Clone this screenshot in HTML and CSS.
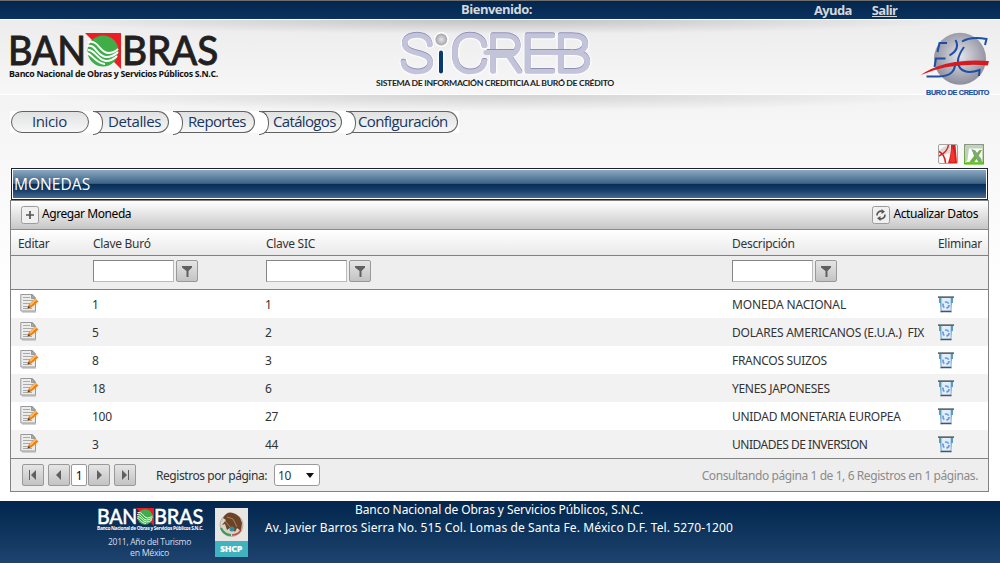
FILE: index.html
```html
<!DOCTYPE html>
<html lang="es">
<head>
<meta charset="utf-8">
<title>SICREB - Monedas</title>
<link rel="stylesheet" href="styles.css">
</head>
<body>
<svg class="defs" width="0" height="0" aria-hidden="true">
  <defs>
    <radialGradient id="ball" cx="50%" cy="45%" r="55%"><stop offset="0" stop-color="#e4e4ea"/><stop offset="1" stop-color="#8d8d9c"/></radialGradient>
    <radialGradient id="dot"><stop offset="0" stop-color="#e6e6e8"/><stop offset="1" stop-color="#9c9ca4"/></radialGradient>
    <linearGradient id="bin" x1="0" x2="1"><stop offset="0" stop-color="#4b93b5"/><stop offset=".25" stop-color="#e4f1fb"/><stop offset=".8" stop-color="#dcecfa"/><stop offset="1" stop-color="#4f8fae"/></linearGradient>
    <linearGradient id="xl" x1="0" x2="0" y1="0" y2="1"><stop offset="0" stop-color="#8a9a86"/><stop offset="1" stop-color="#55b010"/></linearGradient>
    <symbol id="emblem" viewBox="0 0 36 36">
      <path fill="#ee1c25" d="M0 0h36v36z"/>
      <circle cx="18" cy="18" r="15.500" fill="#3fae49"/>
      <g fill="none" stroke="#fff" stroke-width="1.900"><path d="M2 13c10-2 9 10 19 11 5 0 9-2 12-5"/><path d="M3 17c8 0 9 10 18 11 5 0 8-2 11-5"/><path d="M3 9c11-2 11 10 20 11 4 0 8-2 10-4"/><path d="M2 20c6 2 8 10 18 11"/></g>
    </symbol>
    <symbol id="edit" viewBox="0 0 20 20">
      <path d="M2 19h14" stroke="#c4c4c4" stroke-width="1.500"/>
      <path d="M.8 1.500h11.700l3 3.500v13H.8z" fill="#ececec" stroke="#999"/>
      <path d="M11.500 1.500v4h4z" fill="#aaa" stroke="#999"/>
      <path d="M3 4.500h7M3 7.500h10M3 10.500h7M3 13.500h5M3 15.500h9" stroke="#aaa"/>
      <path d="M7.500 15.500l1.300-4L15 5.500l3.500 3-7.200 6z" fill="#ee7f10"/>
      <path d="M9.300 11.300L15.300 5.500l1.500 1.200-6 6z" fill="#ffb95a"/><path d="M7.500 15.500l.8-2.500 2 1.600z" fill="#444"/>
    </symbol>
    <symbol id="trash" viewBox="0 0 16 17">
      <path d="M1.500 2h13l-1.200 14.500h-10.600z" fill="url(#bin)"/>
      <path d="M0 .3h16v1.700h-16z" fill="#62676c"/><path d="M1 2h2v5h-2zM13 2h2v5h-2z" fill="#5a9cbb"/>
      <path d="M2.600 14.700h10.800v1.500h-10.800z" fill="#4c5258"/>
      <circle cx="8" cy="9" r="3" fill="none" stroke="#6a98e4" stroke-width="1.700" stroke-dasharray="4.300 2"/>
    </symbol>
    <symbol id="funnel" viewBox="1 1 20 20"><path d="M6 6h10v1.500L12.500 11v6h-2v-6L6 7.500z" fill="#606060"/></symbol>
  </defs>
</svg>

<div class="topbar"><span class="welcome">Bienvenido:</span><nav class="user"><a>Ayuda</a><a class="out">Salir</a></nav></div>

<header class="banner">
  <svg class="logo-bank" width="212" height="50" viewBox="0 0 212 50">
    <g font-family="Lato" font-weight="500" font-size="41" fill="#231f20" stroke="#231f20" stroke-width=".8">
      <text x="-2" y="31.500" textLength="78" lengthAdjust="spacingAndGlyphs">BAN</text>
      <text x="112" y="31.500" textLength="96" lengthAdjust="spacingAndGlyphs">BRAS</text>
    </g>
    <use href="#emblem" x="75" y="0" width="36" height="36"/>
    <text x="-1" y="44" font-family="Open Sans" font-weight="700" font-size="8.500" fill="#111" textLength="209" lengthAdjust="spacingAndGlyphs">Banco Nacional de Obras y Servicios Públicos S.N.C.</text>
  </svg>
  <svg class="logo-app" width="250" height="62" viewBox="0 0 250 62">
    <g font-family="Roboto" font-weight="100" font-size="51" stroke-linejoin="round" stroke-linecap="round">
      <g fill="none" stroke="#fbfbfd" stroke-width="6">
        <text x="30" y="44" textLength="33" lengthAdjust="spacingAndGlyphs">S</text><text x="80" y="44" textLength="39" lengthAdjust="spacingAndGlyphs">C</text><text x="117" y="44" textLength="37" lengthAdjust="spacingAndGlyphs">R</text><text x="151" y="44" textLength="34" lengthAdjust="spacingAndGlyphs">E</text><text x="184" y="44" textLength="37" lengthAdjust="spacingAndGlyphs">B</text>
      </g>
      <g fill="#8f8fb8" stroke="#8f8fb8" stroke-width="3.500" transform="translate(0 -.7)">
        <text x="30" y="44" textLength="33" lengthAdjust="spacingAndGlyphs">S</text><text x="80" y="44" textLength="39" lengthAdjust="spacingAndGlyphs">C</text><text x="117" y="44" textLength="37" lengthAdjust="spacingAndGlyphs">R</text><text x="151" y="44" textLength="34" lengthAdjust="spacingAndGlyphs">E</text><text x="184" y="44" textLength="37" lengthAdjust="spacingAndGlyphs">B</text>
      </g>
      <path d="M116 24.500h28M160 24.500h42" stroke="#c3c3da" stroke-width="5"/>
      <g fill="#c3c3da" stroke="#c3c3da" stroke-width="3.500">
        <text x="30" y="44" textLength="33" lengthAdjust="spacingAndGlyphs">S</text><text x="80" y="44" textLength="39" lengthAdjust="spacingAndGlyphs">C</text><text x="117" y="44" textLength="37" lengthAdjust="spacingAndGlyphs">R</text><text x="151" y="44" textLength="34" lengthAdjust="spacingAndGlyphs">E</text><text x="184" y="44" textLength="37" lengthAdjust="spacingAndGlyphs">B</text>
      </g>
    </g>
    <circle cx="71.300" cy="11.500" r="6.700" fill="url(#dot)" stroke="#fff" stroke-width="1.500"/>
    <path d="M71 24.500v19" stroke="#fff" stroke-width="6.500" stroke-linecap="round"/>
    <path d="M71 24.500v19" stroke="#063a70" stroke-width="4" stroke-linecap="round"/>
    <path d="M117 21.500h27M160 21.500h41" stroke="#8f8fb8"/>
    <text x="6" y="58" font-family="Lato" font-weight="700" font-size="8" fill="#1c1c1c" textLength="238" lengthAdjust="spacingAndGlyphs">SISTEMA DE INFORMACIÓN CREDITICIA AL BURÓ DE CRÉDITO</text>
  </svg>
  <svg class="logo-buro" width="70" height="66" viewBox="0 0 70 66">
    <circle cx="40" cy="26.700" r="26" fill="url(#ball)"/>
    <g fill="none" stroke="#1b4fa5" stroke-width="2">
      <path d="M17.500 20l2-9h7.500"/><path d="M35.500 8q5 9-6 15.500"/><path d="M14.500 35l1.500-8.500h9.500"/><path d="M35 30q1 14-16 14.500H6.500"/>
      <path d="M42 9.500q9-5.500 24.500-2.500l-1.500 6"/><path d="M44 15q-10 14-3.500 21.500 6 6 19 1.500l-.5 6"/>
    </g>
    <path d="M.7 43q25-17 68.300-14l-1.200 4.400q-38-3-67.100 9.600z" fill="#d71920"/>
    <text x="6" y="63" font-family="Liberation Sans" font-weight="700" font-size="7" fill="#1b4fa5" stroke="#1b4fa5" stroke-width=".2" textLength="63" lengthAdjust="spacingAndGlyphs">BURO DE CREDITO</text>
  </svg>
</header>

<main class="page">
  <nav class="menu">
    <a class="tab first">Inicio</a><a class="tab t2">Detalles</a><a class="tab t3">Reportes</a><a class="tab t4">Catálogos</a><a class="tab t5">Configuración</a>
  </nav>
  <div class="exports">
    <svg width="20" height="21" viewBox="0 0 20 21"><rect x=".5" y=".5" width="19" height="19" rx="1.500" fill="#faf8f7" stroke="#a7a29f"/><path d="M1 6l8-5h3v8l-6 2-5-2z" fill="#dedad8"/><path d="M13 1h4.500l1.500 18h-9q3-8 3-18z" fill="#d3211d"/><path d="M10.500 1q-1 7-9.500 11M1 7.500q6 3 6.500 11.500" fill="none" stroke="#d8231f" stroke-width="1.500"/><path d="M14 2l2.500 8 .5 8h-5z" fill="#f3352d"/></svg>
    <svg width="20" height="21" viewBox="0 0 20 21"><rect x=".7" y=".7" width="18.600" height="19" fill="#fff" stroke="url(#xl)" stroke-width="1.500"/><path d="M2 2h16v2.500H5L3.500 16 2 18z" fill="#c1cfbd"/><path d="M8 6h3l2 3 2.500-3H18l-3.500 6 4 6.500h-4L12.500 15 10 18.500H5l5-6.500z" fill="#6eb244"/><path d="M7 5l3.500 1 7 9v3l-4-3z" fill="#82a685"/><path d="M2 19.200h17" stroke="#5cc614" stroke-width="2"/></svg>
  </div>
  <h1 class="title"><span>MONEDAS</span></h1>
  <section class="grid">
    <div class="tools">
      <a class="tool"><svg width="18" height="18" viewBox="0 0 18 18"><rect class="chip" x=".5" y=".5" width="17" height="17" rx="2"/><path d="M9 5v8M5 9h8" stroke="#555" stroke-width="1.700"/></svg><span class="add">Agregar Moneda</span></a>
      <a class="tool"><svg width="18" height="18" viewBox="0 0 18 18"><rect class="chip" x=".5" y=".5" width="17" height="17" rx="2"/><path d="M5 9.500a4 4 0 0 1 5-4.200M13 8.500a4 4 0 0 1-5 4.200" fill="none" stroke="#555" stroke-width="1.600"/><path d="M9.500 3l3.500 2.800L9.500 8zM8.500 15L5 12.200 8.500 10z" fill="#555"/></svg><span class="refresh">Actualizar Datos</span></a>
    </div>
    <div class="row head"><span>Editar</span><span>Clave Buró</span><span>Clave SIC</span><span>Descripción</span><span class="del">Eliminar</span></div>
    <div class="row filter"><span></span>
      <span class="f"><input><svg class="btn" width="22" height="22"><use href="#funnel"/></svg></span>
      <span class="f"><input><svg class="btn" width="22" height="22"><use href="#funnel"/></svg></span>
      <span class="f"><input><svg class="btn" width="22" height="22"><use href="#funnel"/></svg></span><span></span></div>
    <div class="row"><svg class="e"><use href="#edit"/></svg><span>1</span><span>1</span><span class="desc d1">MONEDA NACIONAL</span><svg class="x"><use href="#trash"/></svg></div>
    <div class="row alt"><svg class="e"><use href="#edit"/></svg><span>5</span><span>2</span><span class="desc d2">DOLARES AMERICANOS (E.U.A.)&nbsp; FIX</span><svg class="x"><use href="#trash"/></svg></div>
    <div class="row"><svg class="e"><use href="#edit"/></svg><span>8</span><span>3</span><span class="desc">FRANCOS SUIZOS</span><svg class="x"><use href="#trash"/></svg></div>
    <div class="row alt"><svg class="e"><use href="#edit"/></svg><span>18</span><span>6</span><span class="desc">YENES JAPONESES</span><svg class="x"><use href="#trash"/></svg></div>
    <div class="row"><svg class="e"><use href="#edit"/></svg><span>100</span><span>27</span><span class="desc">UNIDAD MONETARIA EUROPEA</span><svg class="x"><use href="#trash"/></svg></div>
    <div class="row alt"><svg class="e"><use href="#edit"/></svg><span>3</span><span>44</span><span class="desc d6">UNIDADES DE INVERSION</span><svg class="x"><use href="#trash"/></svg></div>
    <div class="pager">
      <svg class="btn" width="22" height="22" viewBox="1 1 20 20"><path d="M7.500 6v10" stroke="#606060"/><path d="M14 6v10l-5-5z" fill="#606060"/></svg>
      <svg class="btn prev" width="22" height="22" viewBox="1 1 20 20"><path d="M13 6v10l-5-5z" fill="#606060"/></svg>
      <b class="num">1</b>
      <svg class="btn next" width="22" height="22" viewBox="1 1 20 20"><path d="M9 6v10l5-5z" fill="#606060"/></svg>
      <svg class="btn" width="22" height="22" viewBox="1 1 20 20"><path d="M14.500 6v10" stroke="#606060"/><path d="M8 6v10l5-5z" fill="#606060"/></svg>
      <span class="per">Registros por página:</span>
      <span class="select">10<svg width="8" height="5"><path d="M0 0h8L4 5z" fill="#111"/></svg></span>
      <span class="info">Consultando página 1 de 1, 6 Registros en 1 páginas.</span>
    </div>
  </section>
</main>

<footer class="footer">
  <svg class="logo-foot" width="108" height="52" viewBox="0 0 108 52">
    <g font-family="Lato" font-weight="500" font-size="20.500" fill="#fff" stroke="#fff" stroke-width=".4"><text x="0" y="16" textLength="40" lengthAdjust="spacingAndGlyphs">BAN</text><text x="57" y="16" textLength="49" lengthAdjust="spacingAndGlyphs">BRAS</text></g>
    <use href="#emblem" x="39" y="0" width="18" height="18"/>
    <text x="0" y="22" font-family="Open Sans" font-weight="700" font-size="4.500" fill="#fff" textLength="106" lengthAdjust="spacingAndGlyphs">Banco Nacional de Obras y Servicios Públicos S.N.C.</text>
    <g font-family="Open Sans" font-size="8.500" fill="#d5dfeb"><text x="11" y="36.500" textLength="83" lengthAdjust="spacingAndGlyphs">2011, Año del Turismo</text><text x="33" y="47.500" textLength="39" lengthAdjust="spacingAndGlyphs">en México</text></g>
  </svg>
  <svg class="seal" width="33" height="49" viewBox="0 0 33 49">
    <path d="M0 0h33v33H0z" fill="#e8e6e2"/><path d="M0 33h33v16H0z" fill="#3fb3bf"/>
    <circle cx="16.500" cy="17" r="11.500" fill="#d9d2c6" stroke="#a99e90" stroke-width=".7"/>
    <path d="M8 10q4-7 10-5 7 2 9 10l-1 8-4-3-2 4-4-5-4 3-2-6-3 1 4-5z" fill="#6b4327"/>
    <path d="M12 9l6 2 4 8M10 13l5 6" stroke="#b28253" fill="none"/><path d="M6 20q3 7 10 7" stroke="#3b9a61" stroke-width="2" fill="none"/><path d="M17 27q6 0 9-5" stroke="#c64b42" stroke-width="1.500" fill="none"/><circle cx="17" cy="21" r="2.500" fill="#2f8da0"/>
    <text x="5" y="43.500" font-family="Open Sans" font-weight="800" font-size="8" fill="#fff" textLength="22" lengthAdjust="spacingAndGlyphs">SHCP</text>
  </svg>
  <div class="address"><div class="a1">Banco Nacional de Obras y Servicios Públicos, S.N.C.</div><div class="a2">Av. Javier Barros Sierra No. 515 Col. Lomas de Santa Fe. México D.F. Tel. 5270-1200</div></div>
</footer>
</body>
</html>
```
FILE: styles.css
```css
* { box-sizing: border-box; }
body { margin: 0; width: 1000px; height: 563px; overflow: hidden; font: 12px/18px "Noto Sans", "Open Sans", sans-serif; color: #333; letter-spacing: -.3px; background: linear-gradient(#eee 19px, #f7f7f7 150px, #fff 290px); }
svg { display: block; flex: none; }
.defs { position: absolute; }
.logo-bank, .logo-app, .logo-buro, .logo-foot, .seal { overflow: visible; }
.topbar { height: 19px; border-top: 1px solid #6d6d6d; background: linear-gradient(#03264c, #0b3260); display: flex; color: #d3d8de; font: bold 13px/17px "Open Sans", sans-serif; }
.welcome { margin-left: 461px; width: 353px; letter-spacing: -.5px; }
.user { display: flex; gap: 20px; line-height: 19px; letter-spacing: -.65px; }
.out { height: 16px; border-bottom: 1px solid #d3d8de; }
.banner { height: 76px; display: flex; border-top: 1px solid #fff; border-bottom: 1px solid #fff; background: radial-gradient(ellipse 460px 14px at 500px 0, #c2c2c2, transparent), linear-gradient(#ececec, #f7f7f7); }
.logo-bank { margin: 13px 0 0 10px; }
.logo-app { margin: 8px 0 0 148px; }
.logo-buro { margin: 12px 0 0 300px; }
.page { height: 406px; padding: 16px 11px 0 10px; background: radial-gradient(ellipse 460px 16px at 500px 0, #d2d2d2, transparent); }
.menu { display: flex; width: 449px; height: 22px; background: #fff; padding-left: 1px; font: 15px/18px "Open Sans", sans-serif; color: #17365f; letter-spacing: -.4px; }
.tab { position: relative; height: 22px; border: 1px solid #626262; border-left: 0; border-radius: 0 11px 11px 0; background: linear-gradient(#e0e1e2, #f7f7f7); margin-left: 5px; padding-left: 14px; line-height: 19px; white-space: nowrap; }
.tab::before { content: ""; position: absolute; left: -1px; top: -1px; width: 9px; height: 22px; background: #fff; border: 1px solid #626262; border-left: 0; border-radius: 0 9px 9px 0 / 0 11px 11px 0; }
.first { width: 78px; margin: 0; padding-left: 20px; border-left: 1px solid #626262; border-radius: 11px; }
.first::before { display: none; }
.t2 { width: 75px; }
.t3 { width: 81px; letter-spacing: -.65px; }
.t4 { width: 82px; padding-left: 13px; letter-spacing: -.65px; }
.t5 { width: 111px; padding-left: 11px; letter-spacing: -.6px; }
.exports { display: flex; justify-content: flex-end; gap: 6px; height: 35px; padding: 11px 5px 0 0; }
.title { margin: 0 1px; height: 32px; border: 1px solid #201f38; background: #fff; padding: 1px; font: 15.5px/29px "Open Sans", sans-serif; letter-spacing: .05px; color: #fff; }
.title span { display: block; height: 28px; padding-left: 1px; line-height: 29px; background: linear-gradient(#8aa9c0, #3d6286 48%, #042c55 50%, #1a416d 75%, #48688d); }
.grid { height: 292px; border: 1px solid #828282; background: #fff; }
.tools { height: 29px; display: flex; justify-content: space-between; padding: 4px 10px 0; border-bottom: 1px solid #8a8a8a; background: linear-gradient(#fff, #c7c7c7); color: #000; line-height: 18px; letter-spacing: -.43px; }
.tool { display: flex; gap: 3px; }
.tool svg { margin-top: 1px; }
.chip { fill: #f0f0f0; stroke: #9c9c9c; }
.row { display: grid; grid-template-columns: 75px 173px 466px 206px 57px; height: 28px; align-items: center; padding-left: 6px; white-space: nowrap; }
.row span { padding-top: 2px; line-height: 26px; }
.alt { background: #f2f2f2; }
.e { width: 20px; height: 20px; margin: -2px 0 0 3px; }
.x { width: 16px; height: 17px; margin-left: 1px; }
.row .desc { margin-left: 1px; }
.d1 { letter-spacing: -.13px; }
.d2 { letter-spacing: -.22px; }
.d6 { letter-spacing: -.48px; }
.head { height: 26px; padding-left: 7px; border-bottom: 1px solid #828282; background: linear-gradient(#fff, #e9e9e9); }
.head span { padding-top: 3px; line-height: 22px; }
.filter { height: 34px; padding-left: 7px; border-bottom: 1px solid #828282; background: #eee; }
.row .f { display: flex; gap: 2px; padding-top: 0; margin-top: -3px; }
input { width: 81px; height: 22px; margin: 0; padding: 0; border: 1px solid #bbb; border-top-color: #858585; border-left-color: #858585; background: #fff; }
.btn { border: 1px solid #999; border-radius: 2px; background: linear-gradient(#e5e5e5, #c3c3c3); overflow: hidden; }
.pager { display: flex; height: 33px; border-top: 1px solid #828282; background: #eee; padding: 5px 10px 0 11px; line-height: 23px; }
.prev { margin-left: 4px; }
.next { margin-right: 4px; }
.num { width: 16px; height: 22px; margin: 0 1px; border: 1px solid #999; border-radius: 2px; background: #fff; text-align: center; font-weight: 400; color: #200; line-height: 21px; }
.per { margin-left: 20px; width: 118px; white-space: nowrap; letter-spacing: -.44px; }
.select { display: flex; width: 46px; height: 22px; border: 1px solid #999; border-radius: 3px; background: #fff; padding: 0 5px 0 3px; align-items: center; justify-content: space-between; }
.info { margin-left: auto; color: #8b8b8b; white-space: nowrap; letter-spacing: -.41px; }
.footer { height: 62px; display: flex; background: linear-gradient(#02264c, #1d436f); color: #fff; }
.logo-foot { margin: 7px 0 0 97px; }
.seal { margin: 7px 0 0 10px; }
.address { margin-left: 17px; width: 480px; line-height: 18px; white-space: nowrap; }
.a1 { margin-left: 90px; letter-spacing: -.08px; }
.a2 { letter-spacing: .1px; }
```
